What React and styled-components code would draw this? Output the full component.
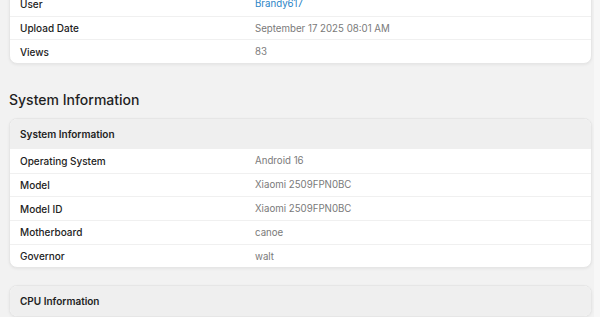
import React from "react";
import styled, { createGlobalStyle } from "styled-components";

const GlobalStyle = createGlobalStyle`
  html, body {
    margin: 0;
    padding: 0;
    background: #f2f2f2;
    overflow: hidden;
    font-family: "Inter", "Open Sans", sans-serif;
  }
`;

// Page layout
const Page = styled.div`
  display: flex;
  height: 317px;
`;

const Content = styled.main`
  flex: 1;
  padding: 0 2px 0 9px;
  margin-top: -9px;
  display: flex;
  flex-direction: column;
`;

const ScrollTrack = styled.div`
  width: 6px;
  background: #f7f7f7;
`;

const SectionTitle = styled.h2`
  margin: 26px 0 8px;
  font-size: 14px;
  line-height: 20px;
  font-weight: 500;
  color: #1f1f1f;
`;

const Card = styled.section`
  background: #fff;
  border: 1px solid #e6e6e6;
  border-radius: 8px;
  box-shadow: 0 1px 3px rgba(0, 0, 0, 0.06);
  overflow: hidden;
  margin-bottom: ${(p) => p.$gap || 0}px;
`;

const CardHeader = styled.div`
  height: 30px;
  display: flex;
  align-items: center;
  padding: 0 10px;
  background: #efefef;
  font-size: 10px;
  font-weight: 600;
  color: #222;
`;

const Row = styled.div`
  display: grid;
  grid-template-columns: 235px 1fr;
  align-items: center;
  height: 23.7px;
  padding: 0 10px;
  font-size: 10px;
  border-top: ${(p) => (p.$first ? "none" : "1px solid #f0f0f0")};
  box-sizing: border-box;
`;

const Label = styled.span`
  color: #222;
  font-weight: 500;
`;

const Value = styled.span`
  font-size: 9.7px;
  color: ${(p) => (p.$link ? "#2a84c6" : "#7a7a7a")};
`;

const mediaRows = [
  ["User", "Brandy617", true],
  ["Upload Date", "September 17 2025 08:01 AM"],
  ["Views", "83"],
];

const systemRows = [
  ["Operating System", "Android 16"],
  ["Model", "Xiaomi 2509FPN0BC"],
  ["Model ID", "Xiaomi 2509FPN0BC"],
  ["Motherboard", "canoe"],
  ["Governor", "walt"],
];

const InfoRows = ({ rows }) =>
  rows.map(([label, value, link], i) => (
    <Row key={label} $first={i === 0}>
      <Label>{label}</Label>
      <Value $link={link}>{value}</Value>
    </Row>
  ));

export default function App() {
  return (
    <>
      <GlobalStyle />
      <Page>
        <Content>
          <Card>
            <InfoRows rows={mediaRows} />
          </Card>

          <SectionTitle>System Information</SectionTitle>
          <Card $gap={17}>
            <CardHeader>System Information</CardHeader>
            <InfoRows rows={systemRows} />
          </Card>

          <Card>
            <CardHeader>CPU Information</CardHeader>
          </Card>
        </Content>
        <ScrollTrack />
      </Page>
    </>
  );
}
